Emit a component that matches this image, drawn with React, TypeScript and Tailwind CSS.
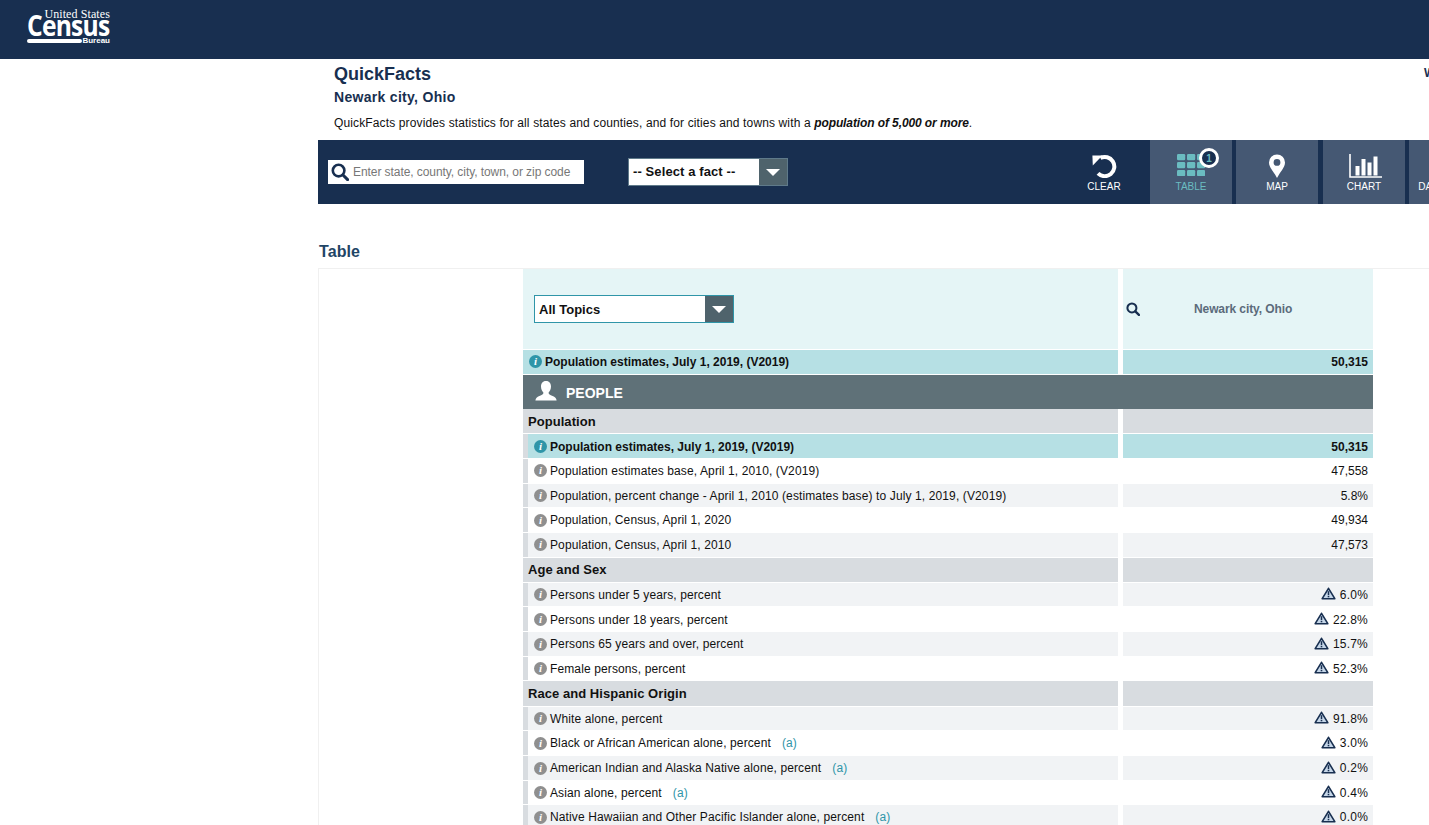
import type { ReactNode } from 'react';

const navy = 'text-[#182f50]';

function InfoDot({ teal }: { teal?: boolean }) {
  return (
    <span
      className={`mr-[3px] flex h-[13px] w-[13px] shrink-0 items-center justify-center rounded-full font-['Liberation_Serif',serif] text-[11px] font-bold italic leading-none text-white ${
        teal ? 'bg-[#2f95a8]' : 'bg-[#8f8f8f]'
      }`}
    >
      i
    </span>
  );
}

function WarnIcon() {
  return (
    <svg width="15" height="13" viewBox="0 0 15 13" className="mb-[2px] mr-[4px] shrink-0">
      <path d="M7.5 1.3 L13.8 11.7 H1.2 Z" fill="#c5d6e8" stroke="#182f50" strokeWidth="1.6" strokeLinejoin="round" />
      <path d="M7.5 4.2 V8" stroke="#182f50" strokeWidth="1.5" />
      <rect x="6.7" y="8.8" width="1.6" height="1.5" fill="#182f50" />
    </svg>
  );
}

function SearchIcon({ size }: { size: number }) {
  return (
    <svg width={size} height={size} viewBox="0 0 18 18" className="shrink-0">
      <circle cx="7.6" cy="7.6" r="5.8" fill="none" stroke="#182f50" strokeWidth="2.6" />
      <path d="M12 12 L16.6 16.6" stroke="#182f50" strokeWidth="3" strokeLinecap="round" />
    </svg>
  );
}

function ClearIcon() {
  return (
    <svg width="25" height="24" viewBox="0 0 25 24" className="block">
      <path d="M8.4 4 A9.6 9.6 0 1 1 6 19.4" fill="none" stroke="#fff" strokeWidth="4" />
      <path d="M0.4 1.6 L10.4 1.6 L0.8 11.6 Z" fill="#fff" />
    </svg>
  );
}

function TableIcon() {
  const cells = [0, 1, 2];
  return (
    <div className="relative">
      <svg width="28" height="22" viewBox="0 0 28 22" className="block">
        {cells.map((r) =>
          cells.map((c) => (
            <rect key={`${r}-${c}`} x={c * 10} y={r * 8} width="8.2" height="6.2" rx="1.2" fill="#6bbcc1" />
          )),
        )}
      </svg>
      <span className="absolute left-[22px] top-[-6px] flex h-[20px] w-[20px] items-center justify-center rounded-full border-[3px] border-white bg-[#182f50] text-[10px] font-bold text-[#6bbcc1]">
        1
      </span>
    </div>
  );
}

function MapIcon() {
  return (
    <svg width="18" height="24" viewBox="0 0 18 24" className="block">
      <path
        fillRule="evenodd"
        d="M9 24 C6 18 1 13.5 1 8.4 A8 8 0 0 1 17 8.4 C17 13.5 12 18 9 24 Z M9 5 A3.4 3.4 0 1 0 9 11.8 A3.4 3.4 0 1 0 9 5 Z"
        fill="#fff"
      />
    </svg>
  );
}

function ChartIcon() {
  return (
    <svg width="33" height="24" viewBox="0 0 33 24" className="ml-[2px] block">
      <path d="M1 0 V23 H33" fill="none" stroke="#fff" strokeWidth="1.6" />
      <rect x="6.5" y="12" width="4" height="9.5" fill="#fff" />
      <rect x="12.5" y="5" width="4" height="16.5" fill="#fff" />
      <rect x="18.5" y="8.5" width="4" height="13" fill="#fff" />
      <rect x="24.5" y="2.5" width="4" height="19" fill="#fff" />
    </svg>
  );
}

function DropArrow() {
  return (
    <span className="flex h-full w-[28px] items-center justify-center bg-[#4f636c]">
      <span className="h-0 w-0 border-x-[7px] border-t-[7px] border-x-transparent border-t-white" />
    </span>
  );
}

function Tile({ icon, label, dim }: { icon: ReactNode; label: string; dim?: boolean }) {
  return (
    <div className="flex h-full w-[82px] shrink-0 flex-col items-center bg-[#455873] pt-[14px]">
      <div className="flex h-[24px] items-start justify-center">{icon}</div>
      <span className={`mt-[3px] text-[10px] leading-3 ${dim ? 'text-[#6bbcc1]' : 'text-white'}`}>{label}</span>
    </div>
  );
}

function Row({ left, right, tall }: { left: ReactNode; right?: ReactNode; tall?: boolean }) {
  return (
    <div className={`flex pb-px ${tall ? 'h-[25.3px]' : 'h-[24.67px]'}`}>
      <div className="w-[595px]">{left}</div>
      <div className="w-[5px]" />
      <div className="w-[250px]">{right}</div>
    </div>
  );
}

function SectionRow({ title }: { title: string }) {
  return (
    <Row
      tall
      left={
        <div className="flex h-full items-center bg-[#d8dce0] pl-[5px] pt-px text-[13px] font-bold tracking-[0.05px] text-[#111]">
          {title}
        </div>
      }
      right={<div className="h-full bg-[#d8dce0]" />}
    />
  );
}

function FactRow({ label, value, note, warn, gray }: { label: string; value: string; note?: boolean; warn?: boolean; gray?: boolean }) {
  const bg = gray ? 'bg-[#f1f3f5]' : 'bg-white';
  return (
    <Row
      left={
        <div className="flex h-full border-l-[5px] border-[#d8dce0]">
          <div className={`flex flex-1 items-center pl-[6px] pt-[0.4px] text-[12px] tracking-[0.12px] text-[#111] ${bg}`}>
            <InfoDot />
            {label}
            {note && <span className="ml-[11px] text-[#2f95a8]">(a)</span>}
          </div>
        </div>
      }
      right={
        <div className={`flex h-full items-center justify-end pr-[5px] pt-[0.4px] text-[12px] text-[#111] ${bg} ${warn ? 'tracking-[0.2px]' : ''}`}>
          {warn && <WarnIcon />}
          {value}
        </div>
      }
    />
  );
}

function HighlightRow({ value, inset }: { value: string; inset?: boolean }) {
  return (
    <Row
      left={
        <div className={`flex h-full ${inset ? 'border-l-[5px] border-[#d8dce0]' : ''}`}>
          <div className={`flex flex-1 items-center bg-[#b6e0e4] pl-[6px] text-[12px] font-bold text-[#111] ${inset ? 'pt-px' : ''}`}>
            <InfoDot teal />
            Population estimates, July 1, 2019, (V2019)
          </div>
        </div>
      }
      right={
        <div className={`flex h-full items-center justify-end bg-[#b6e0e4] pr-[5px] text-[12px] font-bold text-[#111] ${inset ? 'pt-px' : ''}`}>
          {value}
        </div>
      }
    />
  );
}

export default function App() {
  return (
    <div className="h-[825px] w-[1429px] overflow-hidden bg-white font-['Liberation_Sans',Arial,sans-serif]">
      <header className="flex h-[59px] items-start bg-[#182f50] pl-[27px] pt-[8px] text-white">
        <div className="flex w-[83px] flex-col">
          <span className="h-[12px] self-end whitespace-nowrap font-['Liberation_Serif',serif] text-[12px] leading-3 tracking-[0.1px]">United States</span>
          <span className="mt-[-5px] h-[20px] origin-left scale-x-[0.88] whitespace-nowrap font-['Open_Sans',sans-serif] text-[28px] font-bold leading-[20px] tracking-[-0.9px]">
            Census
          </span>
          <div className="mt-[2px] flex h-[8px] items-center justify-between">
            <span className="h-[4px] w-[55px] rounded-full bg-white" />
            <span className="text-[8px] font-bold leading-[8px]">Bureau</span>
          </div>
        </div>
      </header>

      <main className="pl-[318px]">
        <div className={`w-[1106px] pl-4 pt-[4px] ${navy}`}>
          <div className="flex justify-between">
            <h1 className="text-[18px] font-bold leading-[22px]">QuickFacts</h1>
            <span className="w-0 whitespace-nowrap text-[12px] font-bold leading-5">What's New &amp; FAQs</span>
          </div>
          <h2 className="mt-[3px] text-[14px] font-bold leading-[18px] tracking-[0.3px]">Newark city, Ohio</h2>
          <p className="mt-[9px] text-[12px] leading-[16px] tracking-[0.13px] text-[#111]">
            QuickFacts provides statistics for all states and counties, and for cities and towns with a{' '}
            <b className="italic tracking-[-0.1px]">population of 5,000 or more</b>.
          </p>
        </div>

        <div className="mt-[9px] flex h-[64px] w-[1200px] items-center bg-[#182f50] pl-[10px]">
          <div className="flex h-[24px] w-[256px] items-center bg-white pl-[3px] text-[12px] tracking-[-0.07px] text-[#777]">
            <SearchIcon size={18} />
            <span className="ml-[4px]">Enter state, county, city, town, or zip code</span>
          </div>
          <div className="ml-[44px] flex h-[28px] w-[160px] items-center justify-between border border-[#5f7a8a] bg-white pl-[4px] text-[13px] font-bold tracking-[0.1px] text-[#111]">
            <span>-- Select a fact --</span>
            <DropArrow />
          </div>
          <div className="ml-[272px] flex h-full w-[90px] shrink-0 flex-col items-center pr-[2px] pt-[14px]">
            <div className="flex h-[24px] items-start">
              <ClearIcon />
            </div>
            <span className="mt-[3px] text-[10px] leading-3 text-white">CLEAR</span>
          </div>
          <div className="flex h-full gap-[4px]">
            <Tile icon={<TableIcon />} label="TABLE" dim />
            <Tile icon={<MapIcon />} label="MAP" />
            <div className="ml-px">
              <Tile icon={<ChartIcon />} label="CHART" />
            </div>
            <Tile icon={<span />} label="DASHBOARD" />
          </div>
        </div>

        <h3 className="ml-px mt-[38px] h-[26px] text-[16px] font-bold leading-5 tracking-[0.1px] text-[#1f4566]">Table</h3>

        <div className="w-[1200px] border-l border-t border-[#f0f0f0] pl-[204px]">
          <div className="flex h-[81px] w-[850px] pb-px">
            <div className="flex w-[595px] items-center bg-[#e5f5f6] pl-[11px]">
              <div className="flex h-[28px] w-[200px] items-center justify-between border border-[#2f95a8] bg-white pl-[4px] text-[13px] font-bold text-[#111]">
                <span className="pt-px">All Topics</span>
                <DropArrow />
              </div>
            </div>
            <div className="w-[5px]" />
            <div className="flex w-[250px] items-center bg-[#e5f5f6] pl-[3px]">
              <SearchIcon size={14} />
              <span className="ml-[54px] text-[12px] font-bold tracking-[-0.1px] text-[#5b6b7b]">Newark city, Ohio</span>
            </div>
          </div>

          <div className="w-[850px]">
            <HighlightRow value="50,315" />
            <div className="mt-[0.3px] flex h-[34px] items-center bg-[#5f7178] pl-[12px] text-[14px] font-bold text-white">
              <svg width="22" height="20" viewBox="0 0 22 20" className="mb-[2px]">
                <path
                  d="M11 0 C14.5 0 16 2.6 16 5.6 C16 8.6 14.6 10.6 13.6 11.6 C13.4 13.4 15 14 17.6 15 C20 16 21.4 17.2 21.6 19.4 H0.4 C0.6 17.2 2 16 4.4 15 C7 14 8.6 13.4 8.4 11.6 C7.4 10.6 6 8.6 6 5.6 C6 2.6 7.5 0 11 0 Z"
                  fill="#fff"
                />
              </svg>
              <span className="ml-[9px] mt-[4px]">PEOPLE</span>
            </div>
            <SectionRow title="Population" />
            <HighlightRow value="50,315" inset />
            <FactRow label="Population estimates base, April 1, 2010, (V2019)" value="47,558" />
            <FactRow label="Population, percent change - April 1, 2010 (estimates base) to July 1, 2019, (V2019)" value="5.8%" gray />
            <FactRow label="Population, Census, April 1, 2020" value="49,934" />
            <FactRow label="Population, Census, April 1, 2010" value="47,573" gray />
            <SectionRow title="Age and Sex" />
            <FactRow label="Persons under 5 years, percent" value="6.0%" warn gray />
            <FactRow label="Persons under 18 years, percent" value="22.8%" warn />
            <FactRow label="Persons 65 years and over, percent" value="15.7%" warn gray />
            <FactRow label="Female persons, percent" value="52.3%" warn />
            <SectionRow title="Race and Hispanic Origin" />
            <FactRow label="White alone, percent" value="91.8%" warn gray />
            <FactRow label="Black or African American alone, percent" value="3.0%" warn note />
            <FactRow label="American Indian and Alaska Native alone, percent" value="0.2%" warn note gray />
            <FactRow label="Asian alone, percent" value="0.4%" warn note />
            <FactRow label="Native Hawaiian and Other Pacific Islander alone, percent" value="0.0%" warn note gray />
          </div>
        </div>
      </main>
    </div>
  );
}
